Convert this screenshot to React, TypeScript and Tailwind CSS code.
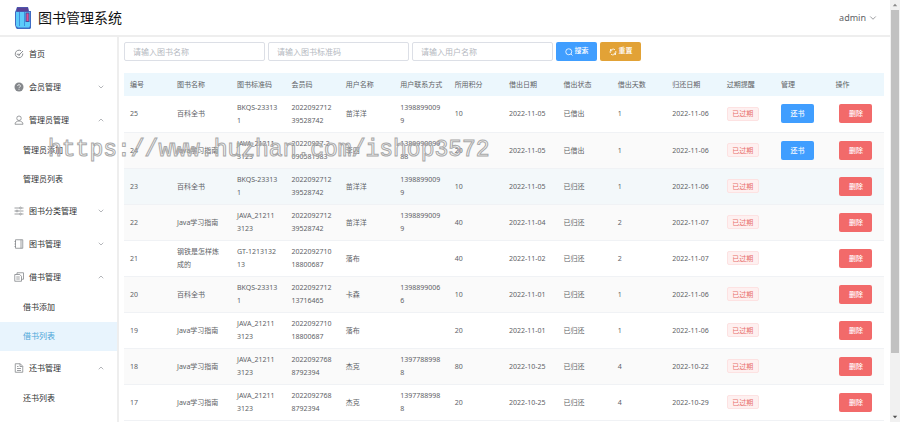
import React from "react";
import { ChevronDown, ChevronUp } from "lucide-react";

interface MenuItem {
    label: string;
    icon: React.ReactNode;
    open?: boolean;
    children?: string[];
}

interface Borrow {
    id: number;
    book: string;
    code: string;
    member: string;
    user: string;
    phone: string;
    points: number;
    borrowed: string;
    status: string;
    days: number;
    returned: string;
}

const Icon = ({ children }: { children: React.ReactNode }) => (
    <svg viewBox="0 0 20 20" className="h-2.5 w-2.5 shrink-0" fill="none" stroke="#85888c" strokeWidth="1.6" aria-hidden="true">
        {children}
    </svg>
);

const menu: MenuItem[] = [
    {
        label: "首页",
        icon: <Icon><path d="M14 3.500A7.500 7.500 0 1 0 17.500 9M5.500 10.500h3M10 12l8-8" strokeWidth="1.900" /><circle cx="10" cy="11.500" r="1.500" /></Icon>,
    },
    {
        label: "会员管理",
        icon: (
            <Icon>
                <circle cx="10" cy="10" r="9" fill="#85888c" stroke="none" />
                <path d="M7.300 8a2.700 2.700 0 1 1 4 2.300c-1 .6-1.300 1-1.300 2M10 13.800v1.800" stroke="#fff" />
            </Icon>
        ),
        open: false,
    },
    {
        label: "管理员管理",
        icon: <Icon><circle cx="10" cy="6.500" r="4.500" /><path d="M2 18.500c0-4 3.500-6.500 8-6.500s8 2.500 8 6.500z" /></Icon>,
        open: true,
        children: ["管理员添加", "管理员列表"],
    },
    {
        label: "图书分类管理",
        icon: (
            <Icon>
                <path d="M1 4h10M15 4h4M1 10h3M8 10h11M1 16h10M15 16h4" />
                <circle cx="13" cy="4" r="1.800" /><circle cx="6" cy="10" r="1.800" /><circle cx="13" cy="16" r="1.800" />
            </Icon>
        ),
        open: false,
    },
    {
        label: "图书管理",
        icon: <Icon><path d="M3 1.500h14.500v17H3zM14 1.500v17M1 5h3M1 10h3M1 15h3" /></Icon>,
        open: false,
    },
    {
        label: "借书管理",
        icon: <Icon><path d="M6 5V1.500h13v13h-4M1.500 5h10l3.500 3.500v10H1.500zM4.500 10h7M4.500 14h7" /></Icon>,
        open: true,
        children: ["借书添加", "借书列表"],
    },
    {
        label: "还书管理",
        icon: <Icon><path d="M2.500 1.500h10l5 5v12h-15zM12 1.500V7h5M6 7h3M6 11h8M6 15h8" /></Icon>,
        open: true,
        children: ["还书列表"],
    },
];

const columns = [
    "编号", "图书名称", "图书标准码", "会员码", "用户名称", "用户联系方式", "所用积分",
    "借出日期", "借出状态", "借出天数", "归还日期", "过期提醒", "管理", "操作",
];

const rows: Borrow[] = [
    { id: 25, book: "百科全书", code: "BKQS-23313\n1", member: "2022092712\n39528742", user: "苗洋洋", phone: "1398899009\n9", points: 10, borrowed: "2022-11-05", status: "已借出", days: 1, returned: "2022-11-06" },
    { id: 24, book: "Java学习指南", code: "JAVA_21211\n3123", member: "20220927-2\n090581983", user: "李四", phone: "1389990099\n88", points: 20, borrowed: "2022-11-05", status: "已借出", days: 1, returned: "2022-11-06" },
    { id: 23, book: "百科全书", code: "BKQS-23313\n1", member: "2022092712\n39528742", user: "苗洋洋", phone: "1398899009\n9", points: 10, borrowed: "2022-11-05", status: "已归还", days: 1, returned: "2022-11-06" },
    { id: 22, book: "Java学习指南", code: "JAVA_21211\n3123", member: "2022092712\n39528742", user: "苗洋洋", phone: "1398899009\n9", points: 40, borrowed: "2022-11-04", status: "已归还", days: 2, returned: "2022-11-07" },
    { id: 21, book: "钢铁是怎样炼\n成的", code: "GT-1213132\n13", member: "2022092710\n18800687", user: "落布", phone: "", points: 40, borrowed: "2022-11-02", status: "已归还", days: 2, returned: "2022-11-07" },
    { id: 20, book: "百科全书", code: "BKQS-23313\n1", member: "2022092712\n13716465", user: "卡森", phone: "1398899006\n6", points: 10, borrowed: "2022-11-01", status: "已归还", days: 1, returned: "2022-11-06" },
    { id: 19, book: "Java学习指南", code: "JAVA_21211\n3123", member: "2022092710\n18800687", user: "落布", phone: "", points: 20, borrowed: "2022-11-01", status: "已归还", days: 1, returned: "2022-11-06" },
    { id: 18, book: "Java学习指南", code: "JAVA_21211\n3123", member: "2022092768\n8792394", user: "杰克", phone: "1397788998\n8", points: 80, borrowed: "2022-10-25", status: "已归还", days: 4, returned: "2022-10-22" },
    { id: 17, book: "Java学习指南", code: "JAVA_21211\n3123", member: "2022092768\n8792394", user: "杰克", phone: "1397788998\n8", points: 20, borrowed: "2022-10-25", status: "已归还", days: 4, returned: "2022-10-29" },
];

const rowColor = (row: Borrow, index: number) => {
    if (row.id === 23) return "bg-[#f3f8fa]";
    return index % 2 ? "bg-[#fafafa]" : "bg-white";
};

const Logo = () => (
    <svg viewBox="0 0 17 22" className="h-[22px] w-[17px]" aria-hidden="true">
        <path d="M2 0h11l1 4h2v17l-1 1H2l-1-1-1-3V5l1-2z" fill="#3f6cc4" />
        <path d="M2 .500h11l.5 4H1.500z" fill="#5a4296" />
        <path d="M1 5h14v14l-1 1.500H3L1 19z" fill="#5ccbfa" />
        <path d="M4 5h1v14H4zM9 5h1v14H9z" fill="#3e8fdd" />
        <path d="M10.500 5.500h4v9.500h-4z" fill="#4a4a9c" />
        <path d="M11.500 6.500h2v7.500h-2z" fill="#e0508f" />
    </svg>
);

const Header = () => (
    <header className="flex h-[37px] items-center justify-between border-b-2 border-[#eeeeee] pr-3 pl-[15px]">
        <div className="flex items-center gap-1.5">
            <Logo />
            <h1 className="text-[14px] leading-5 text-[#111111]">图书管理系统</h1>
        </div>
        <button type="button" className="flex items-center gap-0.5 text-[9px] text-[#606266]">
            admin
            <ChevronDown className="h-2.5 w-2.5" strokeWidth={1.5} />
        </button>
    </header>
);

const Sidebar = () => (
    <nav className="w-[119px] shrink-0 border-r-2 border-[#eeeeee] text-[8px] text-[#303133]">
        {menu.map((item) => (
            <div key={item.label}>
                <button type="button" className="flex h-[33px] w-full items-center gap-[5px] pr-3 pl-3.5 text-left">
                    {item.icon}
                    <span className="flex-1">{item.label}</span>
                    {item.open === true && <ChevronUp className="h-2 w-2 text-[#909399]" strokeWidth={2} />}
                    {item.open === false && <ChevronDown className="h-2 w-2 text-[#909399]" strokeWidth={2} />}
                </button>
                {item.children?.map((child) => (
                    <a
                        key={child}
                        href="#"
                        className={`flex h-[29px] items-center pb-0.5 pl-[23px] ${child === "借书列表" ? "bg-[#e8f4fd] text-[#4ba5d8]" : ""}`}
                    >
                        {child}
                    </a>
                ))}
            </div>
        ))}
    </nav>
);

const SearchBar = () => (
    <form className="flex gap-[3px]">
        {["请输入图书名称", "请输入图书标准码", "请输入用户名称"].map((hint) => (
            <input
                key={hint}
                type="text"
                aria-label={hint}
                placeholder={hint}
                className="h-[19px] w-[141px] rounded-xs border border-[#dcdfe6] px-2 text-[8px] placeholder:text-[#b4b8c0]"
            />
        ))}
        <button type="button" className="flex h-[19px] w-[41px] items-center justify-center gap-0.5 rounded-xs bg-[#409eff] text-[7px] font-medium text-white">
            <svg viewBox="0 0 16 16" className="h-2 w-2" fill="none" stroke="currentColor" strokeWidth="1.600" aria-hidden="true">
                <circle cx="7.500" cy="7.500" r="6" /><path d="M12 12l3 3" />
            </svg>
            搜索
        </button>
        <button type="button" className="flex h-[19px] w-[41px] items-center justify-center gap-0.5 rounded-xs bg-[#e2a236] text-[7px] font-medium text-white">
            <svg viewBox="0 0 16 16" className="h-2 w-2" fill="none" stroke="currentColor" strokeWidth="1.600" aria-hidden="true">
                <path d="M2.500 10A6 6 0 0 1 12 3.500M13.500 6A6 6 0 0 1 4 12.500M3 2v3.500h3.500M13 14v-3.500H9.500" />
            </svg>
            重置
        </button>
    </form>
);

const BorrowTable = () => (
    <table className="mt-3 w-full table-fixed text-left text-[7px] leading-[13px] text-[#606266]">
        <colgroup>
            <col className="w-[47px]" />
            <col className="w-[60px]" />
        </colgroup>
        <thead>
            <tr className="h-[23px] bg-[#ecf7fd]">
                {columns.map((column) => (
                    <th key={column} className="px-1.5 font-normal whitespace-nowrap">{column}</th>
                ))}
            </tr>
        </thead>
        <tbody>
            {rows.map((row, index) => (
                <tr key={row.id} className={`h-9 border-b border-[#f0f2f5] whitespace-pre ${rowColor(row, index)}`}>
                    <td className="px-1.5">{row.id}</td>
                    <td className="px-1.5">{row.book}</td>
                    <td className="px-1.5">{row.code}</td>
                    <td className="px-1.5">{row.member}</td>
                    <td className="px-1.5">{row.user}</td>
                    <td className="px-1.5">{row.phone}</td>
                    <td className="px-1.5">{row.points}</td>
                    <td className="px-1.5">{row.borrowed}</td>
                    <td className="px-1.5">{row.status}</td>
                    <td className="px-1.5">{row.days}</td>
                    <td className="px-1.5">{row.returned}</td>
                    <td className="px-1.5">
                        <span className="flex h-3.5 w-8 items-center justify-center rounded-xs border border-[#fde2e2] bg-[#fef0f0] text-[#e8706c]">已过期</span>
                    </td>
                    <td className="px-1.5">
                        {row.status === "已借出" && (
                            <button type="button" className="flex h-[19px] w-[33px] items-center justify-center rounded-xs bg-[#409eff] font-medium text-white">还书</button>
                        )}
                    </td>
                    <td className="pl-2.5">
                        <button type="button" className="flex h-[19px] w-[33px] items-center justify-center rounded-xs bg-[#f26a6a] font-medium text-white">删除</button>
                    </td>
                </tr>
            ))}
        </tbody>
    </table>
);

const Scrollbar = () => (
    <div className="flex w-2.5 shrink-0 flex-col items-center bg-[#f1f1f1]" aria-hidden="true">
        <svg viewBox="0 0 9 9" className="h-2.5 w-2"><path d="M2 6h5L4.500 3z" fill="#8a8a8a" /></svg>
        <div className="w-2 basis-[343px] bg-[#c1c1c1]" />
        <svg viewBox="0 0 9 9" className="mt-auto h-2.5 w-2"><path d="M2 3h5L4.500 6z" fill="#505050" /></svg>
    </div>
);

export default function App() {
    return (
        <div className="relative flex h-screen overflow-hidden bg-white font-['Noto_Sans','Noto_Sans_CJK_SC',sans-serif]" lang="zh-CN">
            <div className="flex min-w-0 flex-1 flex-col">
                <Header />
                <div className="flex min-h-0 flex-1">
                    <Sidebar />
                    <main className="min-w-0 flex-1 overflow-hidden pt-[5px] pr-1.5 pl-[5px]">
                        <SearchBar />
                        <BorrowTable />
                    </main>
                </div>
            </div>
            <Scrollbar />

            {/* Watermark */}
            <div className="pointer-events-none absolute top-[132px] left-[48px] font-['Liberation_Mono',monospace] text-[23px] leading-9 text-transparent [-webkit-text-stroke:1px_#a8a8a8]">
                https://www.huzhan.com/ishop3572
            </div>
        </div>
    );
}
